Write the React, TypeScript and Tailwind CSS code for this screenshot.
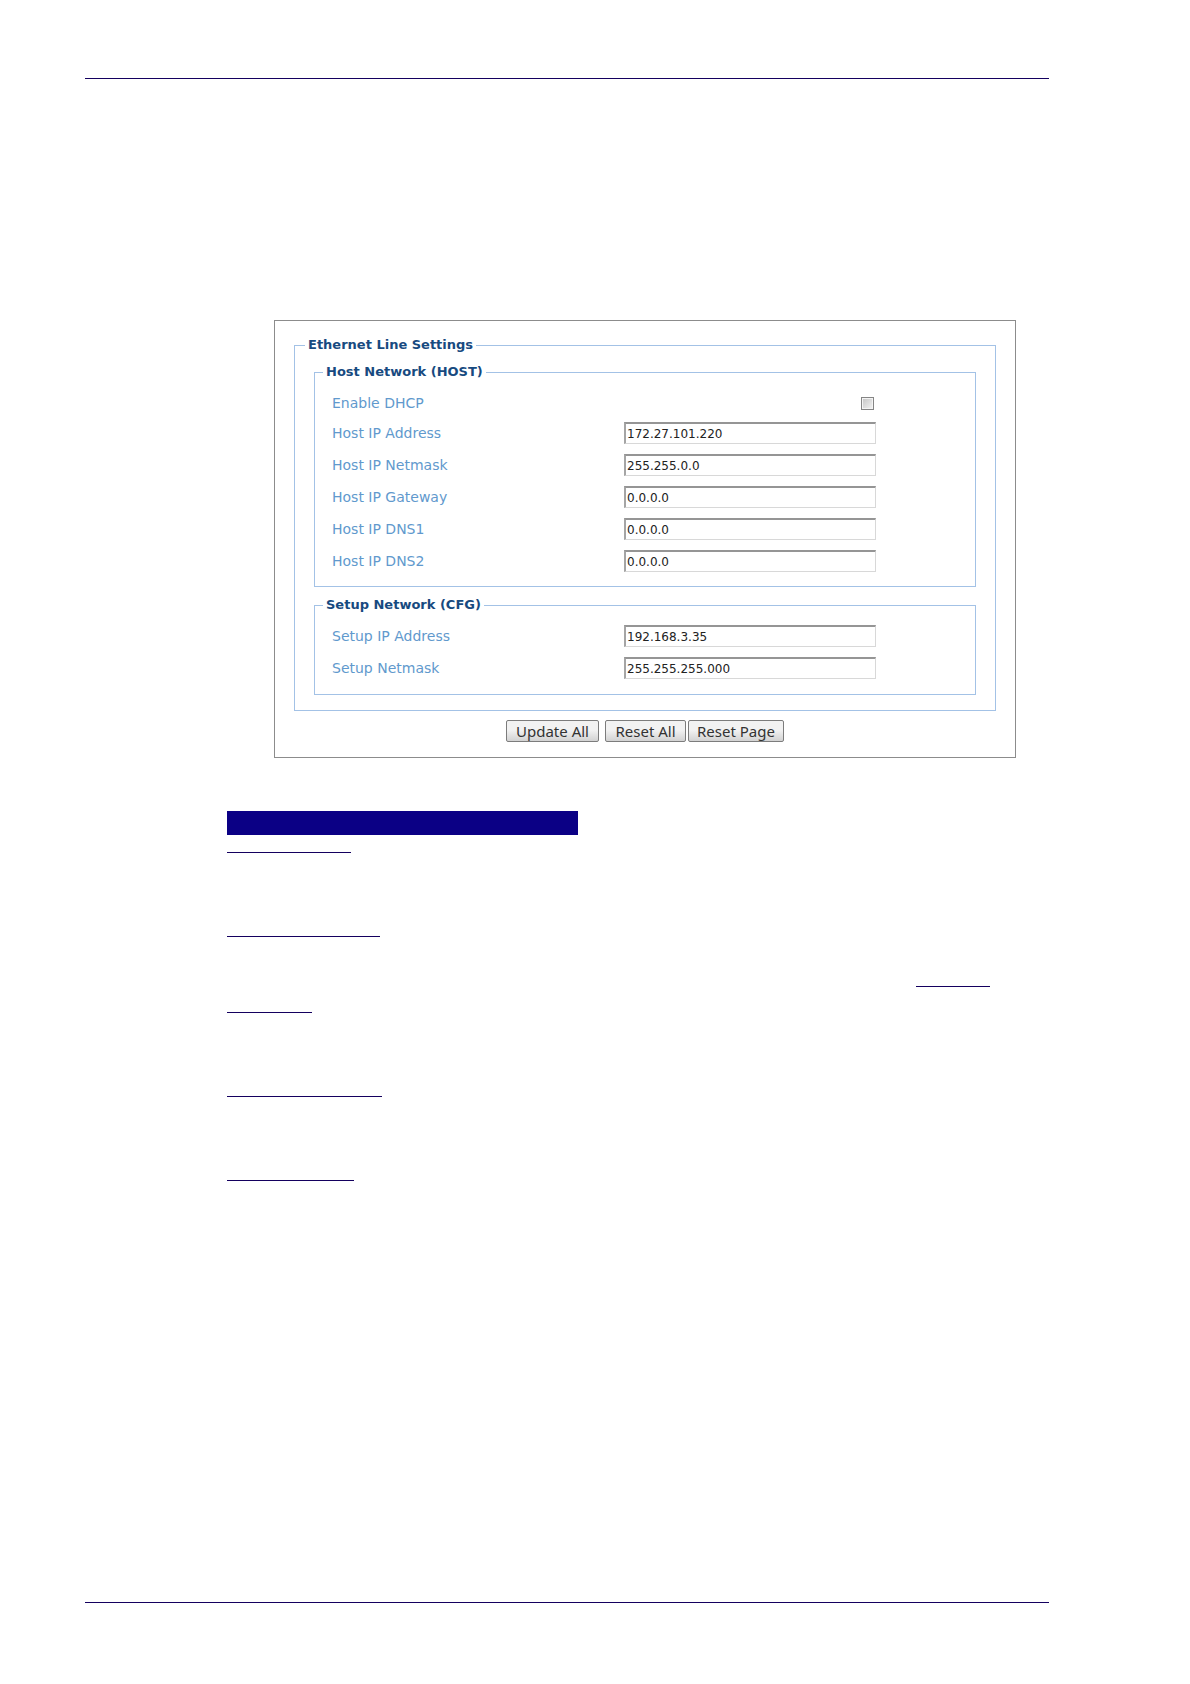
import type { ReactNode } from 'react';

const hostFields = [
  { id: 'host-ip', label: 'Host IP Address', value: '172.27.101.220' },
  { id: 'host-netmask', label: 'Host IP Netmask', value: '255.255.0.0' },
  { id: 'host-gateway', label: 'Host IP Gateway', value: '0.0.0.0' },
  { id: 'host-dns1', label: 'Host IP DNS1', value: '0.0.0.0' },
  { id: 'host-dns2', label: 'Host IP DNS2', value: '0.0.0.0' },
];

const setupFields = [
  { id: 'setup-ip', label: 'Setup IP Address', value: '192.168.3.35' },
  { id: 'setup-netmask', label: 'Setup Netmask', value: '255.255.255.000' },
];

function Legend({ children }: { children: ReactNode }) {
  return (
    <legend className="-ml-[9px] px-[3px] text-[13px] leading-[18px] font-bold text-[#174a80]">
      {children}
    </legend>
  );
}

function Field({ id, label, value }: { id: string; label: string; value: string }) {
  return (
    <div className="flex h-8 items-center">
      <label htmlFor={id} className="w-[292px] text-sm text-[#6199cd]">
        {label}
      </label>
      <input
        id={id}
        type="text"
        defaultValue={value}
        className="h-[22px] w-[252px] border border-t-2 border-l-2 border-t-[#959595] border-r-[#d8d8d8] border-b-[#d8d8d8] border-l-[#a5a5a5] bg-white pl-px text-xs text-[#222]"
      />
    </div>
  );
}

function Button({ children, className }: { children: ReactNode; className: string }) {
  return (
    <button
      type="button"
      className={`h-[22px] rounded-[2px] border border-[#7c7c7c] bg-linear-to-b from-[#f2f2f2] from-45% to-[#d2d2d2] font-['Noto_Sans',sans-serif] text-[15px] leading-5 text-[#333] ${className}`}
    >
      {children}
    </button>
  );
}

function Rule({ className }: { className: string }) {
  return <div className={`h-px bg-[#14005f] ${className}`} />;
}

export default function App() {
  return (
    <div className="flex min-h-screen flex-col bg-white pr-[141px] pl-[85px] font-['DejaVu_Sans',sans-serif]">
      <header className="pt-[78px]">
        <Rule className="w-full" />
      </header>

      <main className="flex-1 pt-[241px] pl-[142px]">
        <form className="mr-[33px] ml-[47px] border border-[#8c8c8c] px-[19px] pt-[15px] pb-[15px]">
          <fieldset className="border border-[#a3c2e6] px-[19px] pb-[15px]">
            <Legend>Ethernet Line Settings</Legend>

            <fieldset className="mt-[9px] border border-[#a3c2e6] px-[17px] pt-2 pb-[9px]">
              <Legend>Host Network (HOST)</Legend>
              <div className="flex h-7 items-center">
                <label htmlFor="dhcp" className="w-[292px] text-sm text-[#6199cd]">
                  Enable DHCP
                </label>
                <div className="flex w-[252px] justify-end pr-0.5">
                  <input
                    id="dhcp"
                    type="checkbox"
                    className="size-[13px] appearance-none border border-[#858585] bg-linear-to-br from-[#c4c4c4] to-[#f4f4f4] ring-1 ring-[#f4f4f4] ring-inset"
                  />
                </div>
              </div>
              {hostFields.map((f) => (
                <Field key={f.id} {...f} />
              ))}
            </fieldset>

            <fieldset className="mt-[9px] border border-[#a3c2e6] px-[17px] pt-1.5 pb-[10px]">
              <Legend>Setup Network (CFG)</Legend>
              {setupFields.map((f) => (
                <Field key={f.id} {...f} />
              ))}
            </fieldset>
          </fieldset>

          <div className="mt-[9px] flex justify-center">
            <Button className="mr-1.5 w-[93px]">Update All</Button>
            <Button className="mr-0.5 w-[81px]">Reset All</Button>
            <Button className="w-24">Reset Page</Button>
          </div>
        </form>

        <div className="mt-[53px] h-6 w-[351px] bg-[#0b0085]" />
        <Rule className="mt-[17px] w-[124px]" />
        <Rule className="mt-[83px] w-[153px]" />
        <Rule className="mt-[49px] mr-[59px] ml-auto w-[74px]" />
        <Rule className="mt-[25px] w-[85px]" />
        <Rule className="mt-[83px] w-[155px]" />
        <Rule className="mt-[83px] w-[127px]" />
      </main>

      <footer className="pb-[81px]">
        <Rule className="w-full" />
      </footer>
    </div>
  );
}
